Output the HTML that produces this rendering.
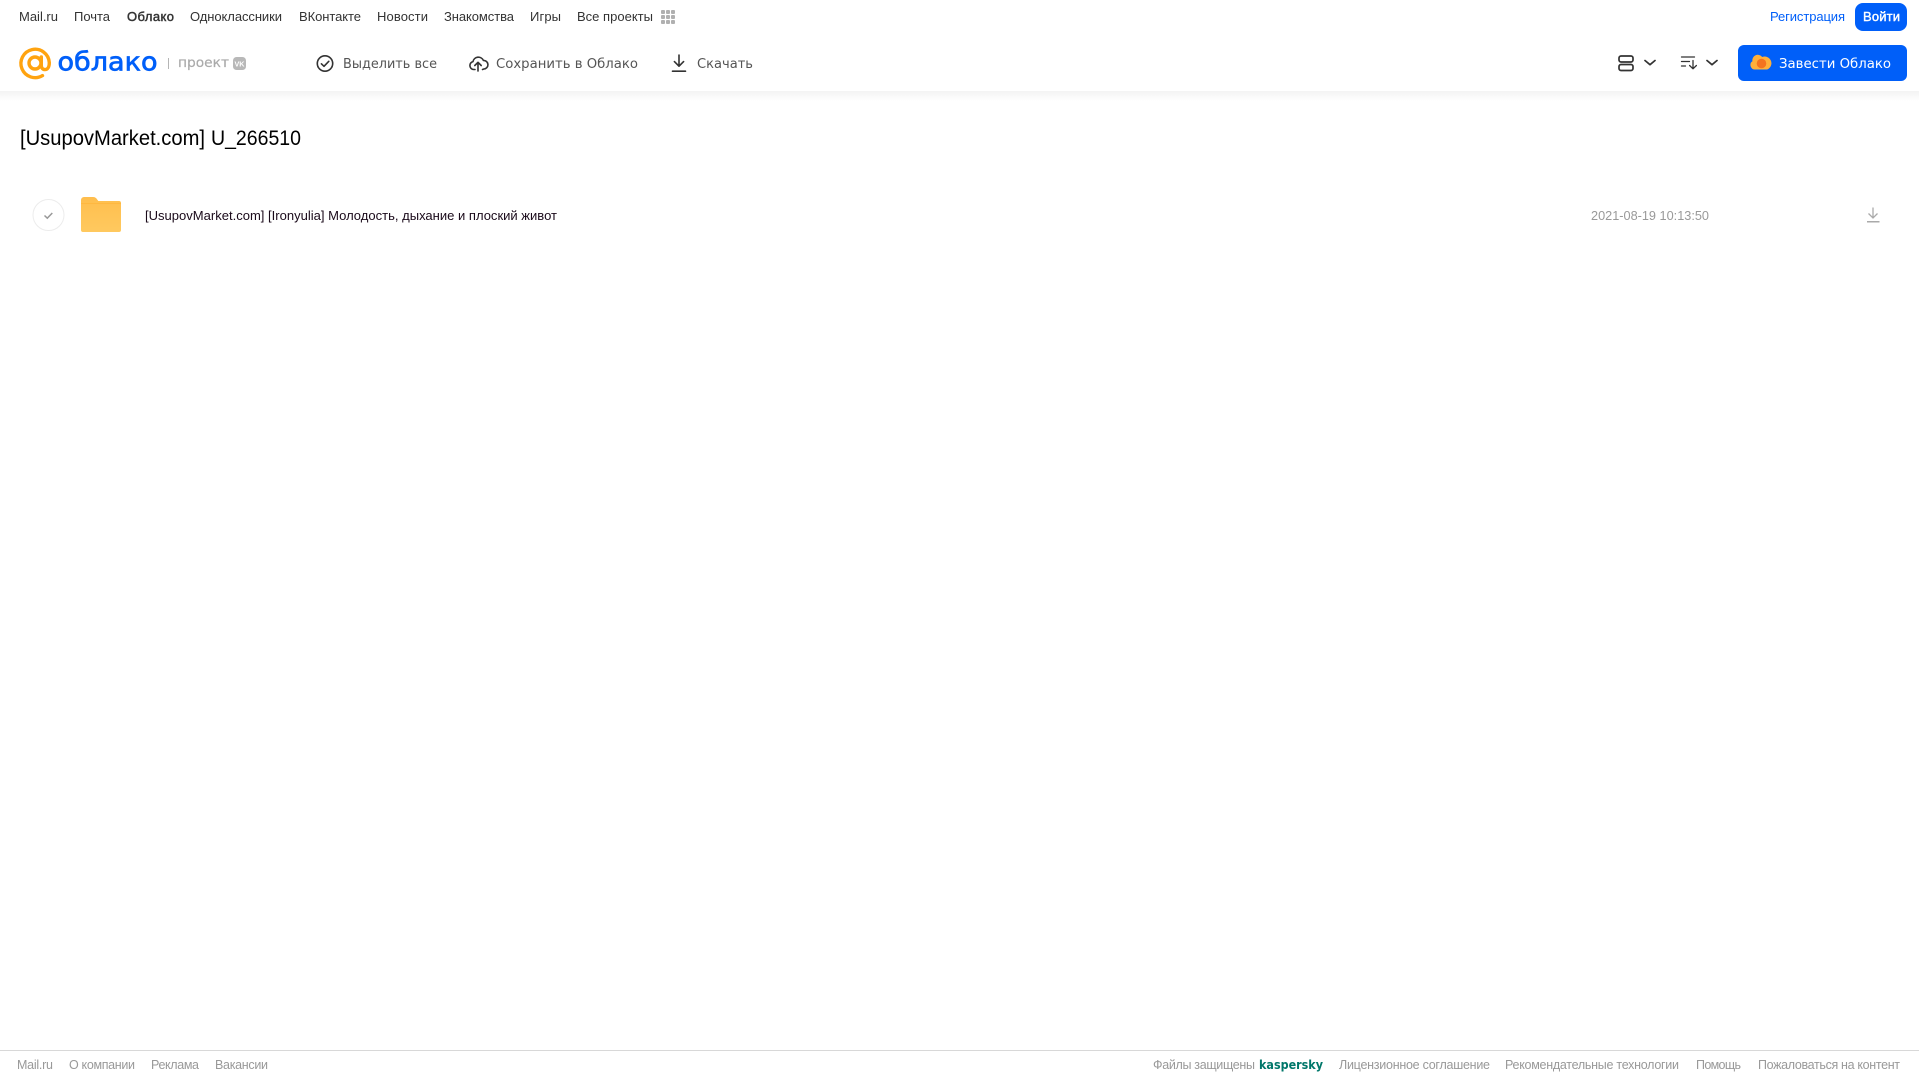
<!DOCTYPE html>
<html lang="ru"><head><meta charset="utf-8"><title>Облако</title>
<style>
html,body{margin:0;padding:0;background:#fff;width:1919px;height:1079px;overflow:hidden}
svg{display:block;position:absolute;left:0;top:0}
text{font-family:"Liberation Sans",Arial,sans-serif}
.n{font-size:13px;fill:#333}
.a{font-family:"DejaVu Sans","Liberation Sans",sans-serif;font-size:13px;fill:#555}
.f{font-size:12.5px;fill:#999}
.d{font-family:"DejaVu Sans","Liberation Sans",sans-serif}
</style></head><body>
<svg width="1919" height="1079" viewBox="0 0 1919 1079" xmlns="http://www.w3.org/2000/svg">
<defs>
<linearGradient id="sh" x1="0" y1="0" x2="0" y2="1"><stop offset="0" stop-color="#f3f3f3"/><stop offset="1" stop-color="#fff"/></linearGradient>
<linearGradient id="fo" x1="0" y1="0" x2="0" y2="1"><stop offset="0" stop-color="#ffbe4d"/><stop offset="1" stop-color="#ffc95f"/></linearGradient>
</defs>
<rect x="0" y="91" width="1919" height="10" fill="url(#sh)"/>

<!-- top nav -->
<text class="n" x="19" y="21" textLength="39" lengthAdjust="spacing">Mail.ru</text>
<text class="n" x="74" y="21" textLength="36" lengthAdjust="spacing">Почта</text>
<text class="n" x="127" y="21" textLength="47" lengthAdjust="spacing" stroke="#333" stroke-width=".45">Облако</text>
<text class="n" x="190" y="21" textLength="92" lengthAdjust="spacing">Одноклассники</text>
<text class="n" x="299" y="21" textLength="62" lengthAdjust="spacing">ВКонтакте</text>
<text class="n" x="377" y="21" textLength="51" lengthAdjust="spacing">Новости</text>
<text class="n" x="444" y="21" textLength="70" lengthAdjust="spacing">Знакомства</text>
<text class="n" x="530" y="21" textLength="31" lengthAdjust="spacing">Игры</text>
<text class="n" x="577" y="21" textLength="76" lengthAdjust="spacing">Все проекты</text>
<g fill="#b0b0b0">
<rect x="661" y="10" width="4" height="4" rx="1"/><rect x="666" y="10" width="4" height="4" rx="1"/><rect x="671" y="10" width="4" height="4" rx="1"/>
<rect x="661" y="15" width="4" height="4" rx="1"/><rect x="666" y="15" width="4" height="4" rx="1"/><rect x="671" y="15" width="4" height="4" rx="1"/>
<rect x="661" y="20" width="4" height="4" rx="1"/><rect x="666" y="20" width="4" height="4" rx="1"/><rect x="671" y="20" width="4" height="4" rx="1"/>
</g>
<text x="1770" y="21" font-size="13" fill="#005ff9" textLength="75" lengthAdjust="spacing">Регистрация</text>
<rect x="1855" y="3" width="52" height="28" rx="8" fill="#005ff9"/>
<text x="1863" y="21" font-size="13" stroke="#fff" stroke-width=".4" fill="#fff" textLength="37" lengthAdjust="spacing">Войти</text>

<!-- logo -->
<g fill="none" stroke="#ffa30f" stroke-width="3.400" stroke-linecap="round">
<circle cx="35" cy="63" r="6"/>
<path d="M42.500 75.600A14.200 14.200 0 1 1 49.300 62.600C49.300 67 47.600 69.600 45 69.600C42.600 69.600 41.300 67.800 41.300 65.300V57"/>
</g>
<text class="d" x="57.500" y="70.500" font-size="26" fill="#005ff9" stroke="#005ff9" stroke-width=".7" textLength="100" lengthAdjust="spacingAndGlyphs">облако</text>
<rect x="168" y="58" width="1" height="11" fill="#b5b5b5"/>
<text class="d" x="178" y="67" font-size="13" fill="#aaa" stroke="#aaa" stroke-width=".2" textLength="51" lengthAdjust="spacingAndGlyphs">проект</text>
<rect x="233" y="57" width="13" height="13" rx="3.500" fill="#b8b8b8"/>
<text x="234.500" y="66.500" font-size="7.500" font-weight="700" fill="#fff" textLength="10" lengthAdjust="spacingAndGlyphs">VK</text>

<!-- actions -->
<g fill="none" stroke="#333" stroke-width="1.600" stroke-linecap="round" stroke-linejoin="round">
<circle cx="325" cy="63.500" r="7.700"/>
<path d="M321.400 63.800l2.600 2.500 4.800-5"/>
<path d="M475 69.500h-1.300a4 4 0 0 1-.7-7.900 5.500 5.500 0 0 1 10.400-1.200 4.300 4.300 0 0 1 .5 8.600l-1.400.5M478 71v-8.500M474.800 65.500l3.200-3.200 3.200 3.200"/>
<path d="M679 55v11.200M674.400 61.600l4.600 4.600 4.600-4.600M672.500 71.200h13"/>
</g>
<text class="a" x="343" y="68" textLength="94" lengthAdjust="spacingAndGlyphs">Выделить все</text>
<text class="a" x="496" y="68" textLength="142" lengthAdjust="spacingAndGlyphs">Сохранить в Облако</text>
<text class="a" x="697" y="68" textLength="56" lengthAdjust="spacingAndGlyphs">Скачать</text>

<!-- right controls -->
<g fill="none" stroke="#333" stroke-width="1.700" stroke-linecap="round" stroke-linejoin="round">
<rect x="1619" y="56" width="14" height="6" rx="2"/>
<rect x="1619" y="64.500" width="14" height="6" rx="2"/>
<path d="M1645 60.500l5 4.200 5-4.200M1707 60.500l5 4.200 5-4.200"/>
<path stroke-width="1.300" d="M1681.500 57h13M1681.500 61.500h8M1681.500 66h4M1693 60.500v8M1689.600 65.500l3.400 3.300 3.400-3.300"/>
</g>
<rect x="1738" y="45" width="169" height="36" rx="6" fill="#005ff9"/>
<path d="M1755 69.500a4.500 4.500 0 0 1-2.600-8.200 5.500 5.500 0 0 1 9.800-4.300 6.300 6.300 0 0 1 5 12.500z" fill="#ffb03a"/>
<circle cx="1761.500" cy="63.500" r="4.800" fill="#f4731f"/>
<text class="d" x="1779" y="68" font-size="13" fill="#fff" textLength="112" lengthAdjust="spacingAndGlyphs">Завести Облако</text>

<!-- title -->
<text x="20" y="145" font-size="21" fill="#000" textLength="185" lengthAdjust="spacingAndGlyphs">[UsupovMarket.com]</text>
<text x="211" y="145" font-size="21" fill="#000" textLength="90" lengthAdjust="spacingAndGlyphs">U_266510</text>

<!-- row -->
<circle cx="48.500" cy="215" r="15.500" fill="#fff" stroke="#ececec" stroke-width="1"/>
<path d="M44.500 215.500l2.800 2.700 5-5.200" fill="none" stroke="#999" stroke-width="1.500"/>
<path d="M84 197h9c2 0 3 .8 4 2.200l1.300 1.800H119a2 2 0 0 1 2 2v27a2 2 0 0 1-2 2H83a2 2 0 0 1-2-2v-30a3 3 0 0 1 3-3z" fill="url(#fo)"/>
<rect x="81" y="203" width="40" height="1" fill="#ffb840"/>
<text x="145" y="220" font-size="13" fill="#1a0a1a" textLength="412" lengthAdjust="spacingAndGlyphs">[UsupovMarket.com] [Ironyulia] Молодость, дыхание и плоский живот</text>
<text x="1591" y="220" font-size="13" fill="#999" textLength="118" lengthAdjust="spacingAndGlyphs">2021-08-19 10:13:50</text>
<path d="M1873 207.500v10.500M1868.500 213.500l4.500 4.500 4.500-4.500" fill="none" stroke="#aaa" stroke-width="1.300"/>
<rect x="1867" y="221" width="12.500" height="1.500" fill="#aaa"/>

<!-- footer -->
<rect x="0" y="1050" width="1919" height="1" fill="#d8d8d8"/>
<text class="f" x="17" y="1069" textLength="36" lengthAdjust="spacing">Mail.ru</text>
<text class="f" x="69" y="1069" textLength="66" lengthAdjust="spacing">О компании</text>
<text class="f" x="151" y="1069" textLength="48" lengthAdjust="spacing">Реклама</text>
<text class="f" x="215" y="1069" textLength="53" lengthAdjust="spacing">Вакансии</text>
<text class="f" x="1153" y="1069" textLength="102" lengthAdjust="spacing">Файлы защищены</text>
<text class="d" x="1259" y="1069" font-size="12" font-weight="700" fill="#00776a" textLength="64" lengthAdjust="spacingAndGlyphs">kaspersky</text>
<text class="f" x="1339" y="1069" textLength="151" lengthAdjust="spacing">Лицензионное соглашение</text>
<text class="f" x="1505" y="1069" textLength="174" lengthAdjust="spacing">Рекомендательные технологии</text>
<text class="f" x="1696" y="1069" textLength="45" lengthAdjust="spacing">Помощь</text>
<text class="f" x="1758" y="1069" textLength="142" lengthAdjust="spacing">Пожаловаться на контент</text>
</svg>
</body></html>
